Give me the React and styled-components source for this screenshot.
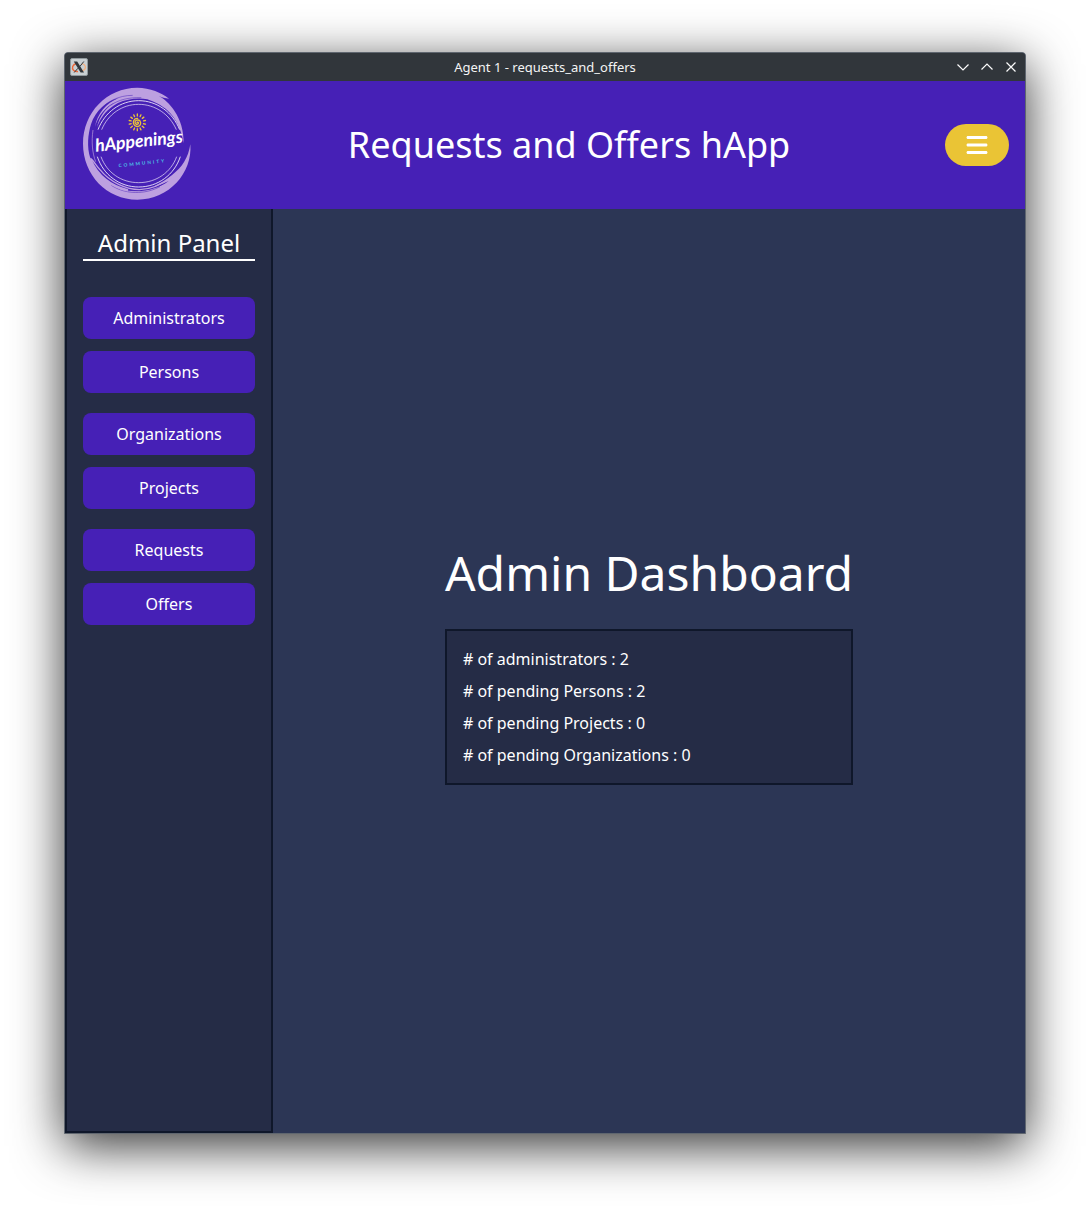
import React from "react";
import styled, { createGlobalStyle } from "styled-components";
import { FaBars } from "react-icons/fa6";

const GlobalStyle = createGlobalStyle`
  *, *::before, *::after { box-sizing: border-box; }
  body {
    margin: 0;
    background: #fff;
    font-family: "Noto Sans", sans-serif;
    font-size: 16px;
    line-height: 24px;
    color: #fff;
  }
  h1, h2, p, ul { margin: 0; padding: 0; font-weight: 400; }
  ul { list-style: none; }
  button { font: inherit; color: inherit; border: 0; cursor: pointer; }
`;

const Desktop = styled.div`
  display: flex;
  min-height: 100vh;
  padding: 52px 64px 76px;
`;

const Window = styled.div`
  flex: 1;
  min-width: 0;
  display: flex;
  flex-direction: column;
  border: 1px solid #5f666f;
  border-radius: 4px 4px 0 0;
  background: #2c3655;
  box-shadow: 0 12px 50px rgba(0, 0, 0, 0.8);
`;

const TitleBar = styled.div`
  display: grid;
  grid-template-columns: 1fr auto 1fr;
  align-items: center;
  height: 28px;
  padding: 0 5px;
  border-radius: 3px 3px 0 0;
  background: #31363b;
  color: #f4f4f4;
  font-size: 13px;
  line-height: 18px;
`;

const WindowControls = styled.div`
  display: flex;
  justify-content: flex-end;
  gap: 6px;
`;

const WindowButton = styled.button`
  display: grid;
  place-items: center;
  width: 18px;
  height: 18px;
  padding: 0;
  background: none;

  svg {
    fill: none;
    stroke: #fcfcfc;
    stroke-width: 1.2;
  }
`;

const Header = styled.header`
  display: flex;
  align-items: center;
  justify-content: space-between;
  height: 128px;
  padding: 0 16px;
  background: #4620b6;
`;

const LogoArt = styled.svg`
  display: block;
  overflow: visible;
`;

const AppTitle = styled.p`
  font-size: 36px;
  line-height: 40px;
`;

const MenuButton = styled.button`
  display: grid;
  place-items: center;
  width: 64px;
  height: 42px;
  padding: 0;
  border-radius: 21px;
  background: #eac435;
`;

const Body = styled.div`
  flex: 1;
  display: flex;
`;

const Sidebar = styled.nav`
  display: flex;
  flex-direction: column;
  gap: 36px;
  width: 208px;
  padding: 18px 16px 16px;
  border: 2px solid #0f172a;
  border-top: 0;
  background: #252c46;
`;

const PanelTitle = styled.h2`
  border-bottom: 2px solid #fff;
  font-size: 24px;
  line-height: 32px;
  text-align: center;
`;

const NavGroups = styled.div`
  display: flex;
  flex-direction: column;
  gap: 20px;
`;

const NavGroup = styled.div`
  display: flex;
  flex-direction: column;
  gap: 12px;
`;

const NavButton = styled.button`
  height: 42px;
  padding: 0 20px;
  border-radius: 8px;
  background: #4620b6;
`;

const Main = styled.main`
  flex: 1;
  display: flex;
  align-items: center;
  justify-content: center;
  padding-bottom: 8px;
`;

const Dashboard = styled.section`
  display: flex;
  flex-direction: column;
  gap: 32px;
`;

const DashboardTitle = styled.h1`
  font-size: 48px;
  line-height: 48px;
`;

const Stats = styled.ul`
  display: flex;
  flex-direction: column;
  gap: 8px;
  padding: 16px;
  border: 2px solid #0f172a;
  background: #252c46;
`;

const navGroups = [
  ["Administrators", "Persons"],
  ["Organizations", "Projects"],
  ["Requests", "Offers"],
];

const stats = [
  ["administrators", 2],
  ["pending Persons", 2],
  ["pending Projects", 0],
  ["pending Organizations", 0],
];

function XIcon() {
  return (
    <svg width="18" height="18" viewBox="0 0 18 18" aria-hidden="true">
      <rect x=".5" y=".5" width="17" height="17" rx="1.500" fill="#c9d0d3" stroke="#8f989c" />
      <path d="M6 5.500C2.500 7 1.500 10 3.500 12.200c1 1.100 2.800 1.500 4.500 1.300" fill="none" stroke="#ee6a3c" strokeWidth="1.400" />
      <path d="M10.500 13.300c4-.6 5.700-3 4.700-5.300-.5-1.300-1.800-2.200-3.200-2.400" fill="none" stroke="#f0b184" strokeWidth="1.400" />
      <path d="M3.800 3.500h3.400l6.800 11h-3.400z" fill="#31363b" />
      <path d="M13.800 3.500 9.900 8.400M8 10.200 4.200 14.500" stroke="#31363b" strokeWidth="1" />
    </svg>
  );
}

function Sun() {
  const rays = Array.from({ length: 14 }, (_, i) => (i * 360) / 14);
  return (
    <g transform="translate(232 232)" fill="none" stroke="#eac435" strokeLinecap="round">
      {rays.map((a) => (
        <path key={a} d="M0-19V-25" strokeWidth="4" transform={`rotate(${a})`} />
      ))}
      <path
        d="M-1 1C1-3 5 0 3 4C0 8-7 6-7 0C-7-8 4-9 8-4C12 2 10 10 3 12C-5 14-13 8-12-1C-11-8-5-12 1-12"
        strokeWidth="4"
      />
    </g>
  );
}

function Logo() {
  return (
    <LogoArt width="112" height="112" viewBox="63 132 336 336" role="img" aria-label="hAppenings Community">
      <path
        fill="#bda0e0"
        d="M327 161C316 159 305 158 296 152C325 168 373 216 371 295C362 248 347 219 322 196C307 182 282 170 262 163C235 157 200 162 174 174C142 191 124 214 111 246C119 214 137 189 165 172C138 184 114 213 105 246C111 208 138 174 176 159C142 167 106 196 93 238C84 268 80 305 91 340C104 382 145 421 190 434C240 444 288 436 326 408C306 417 292 424 280 425C300 415 322 402 337 389C366 368 385 338 391 298C398 384 327 464 232 464C140 464 69 389 69 296C69 203 140 128 232 128C270 128 305 143 327 161Z"
      />
      <g fill="none" stroke="#4620b6" strokeWidth="1.500">
        <path d="M112 205C136 170 176 151 218 151" />
        <path d="M152 181C176 164 205 157 244 158" />
        <path d="M116 378C147 418 194 442 247 437" />
        <path d="M154 421C196 449 255 449 300 425" />
      </g>
      <g fill="none" stroke="#bda0e0">
        <path d="M99 255C94 290 97 325 107 350" strokeWidth="2" />
        <path d="M91 340C101 346 108 362 120 374C150 412 200 434 238 434C275 433 307 417 336 395" strokeWidth="4" />
        <path d="M92 344C112 393 154 425 204 436" strokeWidth="7" />
      </g>
      <g fill="none" stroke="#f4effc" strokeWidth="2.600">
        <path d="M114 254C134 202 181 167 236 167C291 167 338 202 359 254" />
        <path d="M125 254C144 208 186 178 236 178C286 178 329 208 349 254" strokeWidth="2" />
        <path d="M112 335C130 390 179 426 236 426C294 426 343 389 361 335" />
        <path d="M123 335C140 382 183 413 236 413C289 413 333 382 350 335" strokeWidth="2" />
      </g>
      <Sun />
      <text
        transform="translate(107 320) rotate(-6)"
        fill="#fff"
        fontFamily="Lato, sans-serif"
        fontSize="53"
        fontWeight="700"
        fontStyle="italic"
      >
        hAppenings
      </text>
      <text
        transform="translate(176 367) rotate(-6)"
        fill="#4cc3e8"
        fontFamily="Lato, sans-serif"
        fontSize="14"
        fontWeight="700"
        letterSpacing="6"
      >
        COMMUNITY
      </text>
    </LogoArt>
  );
}

export default function App() {
  return (
    <>
      <GlobalStyle />
      <Desktop>
        <Window>
          <TitleBar>
            <XIcon />
            <span>Agent 1 - requests_and_offers</span>
            <WindowControls>
              <WindowButton aria-label="Minimize">
                <svg width="12" height="12" viewBox="0 0 12 12"><path d="M.5 3.500 6 9l5.500-5.500" /></svg>
              </WindowButton>
              <WindowButton aria-label="Maximize">
                <svg width="12" height="12" viewBox="0 0 12 12"><path d="M.5 8.500 6 3l5.500 5.500" /></svg>
              </WindowButton>
              <WindowButton aria-label="Close">
                <svg width="12" height="12" viewBox="0 0 12 12"><path d="m1.500 1.500 9 9m0-9-9 9" /></svg>
              </WindowButton>
            </WindowControls>
          </TitleBar>
          <Header>
            <Logo />
            <AppTitle>Requests and Offers hApp</AppTitle>
            <MenuButton aria-label="Menu">
              <FaBars size={24} />
            </MenuButton>
          </Header>
          <Body>
            <Sidebar>
              <PanelTitle>Admin Panel</PanelTitle>
              <NavGroups>
                {navGroups.map((group) => (
                  <NavGroup key={group[0]}>
                    {group.map((label) => (
                      <NavButton key={label}>{label}</NavButton>
                    ))}
                  </NavGroup>
                ))}
              </NavGroups>
            </Sidebar>
            <Main>
              <Dashboard>
                <DashboardTitle>Admin Dashboard</DashboardTitle>
                <Stats>
                  {stats.map(([label, count]) => (
                    <li key={label}>{`# of ${label} : ${count}`}</li>
                  ))}
                </Stats>
              </Dashboard>
            </Main>
          </Body>
        </Window>
      </Desktop>
    </>
  );
}
